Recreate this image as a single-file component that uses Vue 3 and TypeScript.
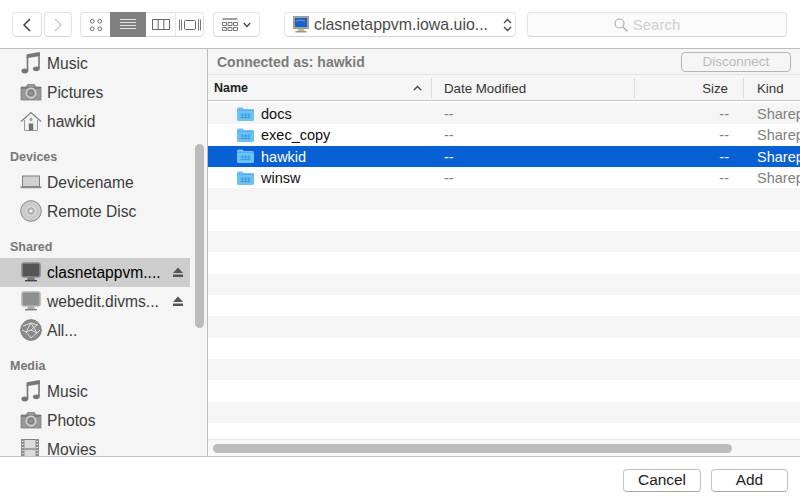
<script setup lang="ts">
interface Item { kind: 'head' | 'row'; label: string; icon?: string; selected?: boolean; eject?: boolean }
const sidebar: Item[] = [
  { kind: 'row', label: 'Music', icon: 'music' },
  { kind: 'row', label: 'Pictures', icon: 'camera' },
  { kind: 'row', label: 'hawkid', icon: 'home' },
  { kind: 'head', label: 'Devices' },
  { kind: 'row', label: 'Devicename', icon: 'laptop' },
  { kind: 'row', label: 'Remote Disc', icon: 'disc' },
  { kind: 'head', label: 'Shared' },
  { kind: 'row', label: 'clasnetappvm....', icon: 'monitor-dark', selected: true, eject: true },
  { kind: 'row', label: 'webedit.divms...', icon: 'monitor', eject: true },
  { kind: 'row', label: 'All...', icon: 'globe' },
  { kind: 'head', label: 'Media' },
  { kind: 'row', label: 'Music', icon: 'music' },
  { kind: 'row', label: 'Photos', icon: 'camera' },
  { kind: 'row', label: 'Movies', icon: 'film' },
]
const files = ['docs', 'exec_copy', 'hawkid', 'winsw']
const emptyRows = Array.from({ length: 12 }, (_, i) => i)
</script>

<template>
  <div class="win">
    <svg class="sprite" width="0" height="0">
      <defs>
        <symbol id="music" viewBox="0 0 22 22">
          <path d="M7.500 3.500V19M19 1v15.500" fill="none" stroke="#777" stroke-width="1.600"/>
          <path d="M6.700 2.200 19.800 0v4L6.700 6.200z" fill="#777"/>
          <ellipse cx="4.800" cy="19" rx="3.400" ry="2.400" fill="#777"/>
          <ellipse cx="16.300" cy="16.800" rx="3.400" ry="2.400" fill="#777"/>
        </symbol>
        <symbol id="camera" viewBox="0 0 22 18">
          <path d="M1 4h5l1.500-2.500h7L16 4h5v13H1z" fill="#979797" stroke="#808080" stroke-width=".8"/>
          <path d="M1 4h20v1.600H1z" fill="#777"/>
          <circle cx="11" cy="10" r="5" fill="#a8a8a8" stroke="#e4e4e4" stroke-width="1"/>
          <circle cx="11" cy="10" r="2.700" fill="#949494" stroke="#666" stroke-width=".7"/>
        </symbol>
        <symbol id="home" viewBox="0 0 22 20">
          <path d="M1 10.500 11 1.500l10 9" fill="none" stroke="#808080" stroke-width="1.300"/>
          <path d="M4.500 9v10.500h13V9" fill="#f2f2f2" stroke="#999" stroke-width="1"/>
          <rect x="8.800" y="12.500" width="4.400" height="7" fill="#707070"/>
          <circle cx="11" cy="8.500" r="1.500" fill="#999"/>
        </symbol>
        <symbol id="laptop" viewBox="0 0 22 14">
          <rect x="2.500" y="1" width="17" height="10.500" fill="#d0d0d0" stroke="#808080" stroke-width="1"/>
          <path d="M0 11.500h22l-1 1.800H1z" fill="#8c8c8c"/>
        </symbol>
        <symbol id="disc" viewBox="0 0 22 22">
          <circle cx="11" cy="11" r="10.300" fill="#cdcdcd" stroke="#888" stroke-width="1"/>
          <circle cx="11" cy="11" r="6" fill="#dadada" stroke="#bbb" stroke-width=".6"/>
          <circle cx="11" cy="11" r="3.300" fill="#bdbdbd" stroke="#999" stroke-width=".7"/>
          <circle cx="11" cy="11" r="1.300" fill="#f5f5f5"/>
        </symbol>
        <symbol id="monitor" viewBox="0 0 20 20">
          <rect x="1" y="1" width="18" height="14" rx="2" fill="#8f8f8f" stroke="#b4b4b4" stroke-width="1.600"/>
          <path d="M7 15.500h6l1 2.500H6z" fill="#aaa"/>
          <rect x="4" y="18" width="12" height="1.400" fill="#808080"/>
        </symbol>
        <symbol id="monitor-dark" viewBox="0 0 20 20">
          <rect x="1" y="1" width="18" height="14" rx="2" fill="#555" stroke="#8a8a8a" stroke-width="1.600"/>
          <path d="M7 15.500h6l1 2.500H6z" fill="#777"/>
          <rect x="4" y="18" width="12" height="1.400" fill="#444"/>
        </symbol>
        <symbol id="globe" viewBox="0 0 22 22">
          <circle cx="11" cy="11" r="10.400" fill="#8a8a8a" stroke="#777" stroke-width=".8"/>
          <path d="M3 7 11 4l7 2M11 4 6 13l5 6 6-5-6-10M6 13l-4-2M17 14l3-3M11 11l6-5M11 11l-5 2M11 11l6 3" fill="none" stroke="#e6e6e6" stroke-width=".9"/>
        </symbol>
        <symbol id="film" viewBox="0 0 18 20">
          <rect x="0.500" y="0.500" width="17" height="19" fill="#dcdcdc" stroke="#808080"/>
          <rect x="0" y="0" width="3.500" height="20" fill="#8c8c8c"/>
          <rect x="14.500" y="0" width="3.500" height="20" fill="#8c8c8c"/>
          <path d="M1 2.500h1.500M1 5.500h1.500M1 8.500h1.500M1 11.500h1.500M1 14.500h1.500M1 17.500h1.500M15.500 2.500H17M15.500 5.500H17M15.500 8.500H17M15.500 11.500H17M15.500 14.500H17M15.500 17.500H17" stroke="#eee"/>
          <path d="M3.500 10h11" stroke="#8c8c8c" stroke-width="1.500"/>
        </symbol>
        <symbol id="folder" viewBox="0 0 17 14">
          <path d="M0 2q0-1.500 1.500-1.500h4L7 2h8.500Q17 2 17 3.500v9q0 1.500-1.500 1.500h-14Q0 14 0 12.500z" fill="#6cc2f6"/>
          <path d="M0 3.500h17" stroke="#4ea9e8" stroke-width=".8"/>
          <path d="M5.200 6v5.500M8.500 6v5.500M11.800 6v5.500M3.500 8h10M3.500 10.500h10" stroke="#3d9de2" stroke-width="1"/>
        </symbol>
      </defs>
    </svg>

    <header class="toolbar">
      <div class="nav">
        <button class="tb back">
          <svg width="10" height="16" viewBox="0 0 10 16"><path d="M8 2 2 8l6 6" fill="none" stroke="#444" stroke-width="1.500"/></svg>
        </button>
        <button class="tb forward">
          <svg width="10" height="16" viewBox="0 0 10 16"><path d="M2 2l6 6-6 6" fill="none" stroke="#ccc" stroke-width="1.500"/></svg>
        </button>
      </div>
      <div class="views">
        <div class="view icon-view">
          <svg width="12" height="12" viewBox="0 0 12 12"><g fill="none" stroke="#666" stroke-width="1"><rect x=".5" y=".5" width="3.500" height="3.500" rx="1.500"/><rect x="8" y=".5" width="3.500" height="3.500" rx="1.500"/><rect x=".5" y="8" width="3.500" height="3.500" rx="1.500"/><rect x="8" y="8" width="3.500" height="3.500" rx="1.500"/></g></svg>
        </div>
        <div class="view list-view">
          <svg width="16" height="12" viewBox="0 0 16 12"><path d="M0 .5h16M0 3.500h16M0 6.500h16M0 9.500h16" stroke="#e4e4e4" stroke-width="1"/></svg>
        </div>
        <div class="view col-view">
          <svg width="18" height="12" viewBox="0 0 18 12"><path d="M.5.500h17v10H.500zM6.200.500v10M11.800.500v10" fill="none" stroke="#666" stroke-width="1"/></svg>
        </div>
        <div class="view flow-view">
          <svg width="22" height="12" viewBox="0 0 22 12"><path d="M.5.500v11M2.500.500v11M19.500.500v11M21.500.500v11" stroke="#777" stroke-width="1"/><rect x="5.500" y="1.500" width="11" height="9" rx="1" fill="none" stroke="#666"/></svg>
        </div>
      </div>
      <button class="tb arrange">
        <svg width="16" height="13" viewBox="0 0 16 13"><g fill="none" stroke="#777" stroke-width="1"><path d="M.5 1h15" stroke-width="1.400"/><path d="M.5 4.500h4v3h-4zM6 4.500h4v3H6zM11.500 4.500h4v3h-4zM.5 9.500h4v3h-4zM6 9.500h4v3H6zM11.500 9.500h4v3h-4z"/></g></svg>
        <svg width="8" height="6" viewBox="0 0 8 6"><path d="M.8 1 4 4.500 7.200 1" fill="none" stroke="#444" stroke-width="1.300"/></svg>
      </button>
      <div class="path">
        <svg class="path-icon" width="16" height="17" viewBox="0 0 16 17">
          <rect x="0.500" y="0.500" width="15" height="12" fill="#c9c2a6" stroke="#a39c80"/>
          <rect x="1.700" y="1.700" width="12.600" height="9.600" fill="#1f5fc4"/>
          <path d="M3 5q4-2 9 0" stroke="#6d9fe6" fill="none"/>
          <path d="M5.500 13h5l1 2h-7z" fill="#bdb69b"/>
          <rect x="2.500" y="15" width="11" height="1.500" fill="#9c9679"/>
        </svg>
        <span class="path-text">clasnetappvm.iowa.uio...</span>
        <svg class="path-arrows" width="9" height="14" viewBox="0 0 9 14"><path d="M1 5 4.500 1.500 8 5M1 9l3.500 3.500L8 9" fill="none" stroke="#444" stroke-width="1.300"/></svg>
      </div>
      <div class="search">
        <svg width="14" height="14" viewBox="0 0 14 14"><circle cx="5.500" cy="5.500" r="4.500" fill="none" stroke="#aaa" stroke-width="1.100"/><path d="M9 9l4.500 4.500" stroke="#aaa" stroke-width="1.200"/></svg>
        <span>Search</span>
      </div>
    </header>

    <main class="body">
      <aside class="sidebar">
        <template v-for="(it, i) in sidebar" :key="i">
          <div v-if="it.kind === 'head'" class="side-head">{{ it.label }}</div>
          <div v-else class="side-row" :class="{ selected: it.selected }">
            <svg class="side-icon" :class="'i-' + it.icon"><use :href="'#' + it.icon" /></svg>
            <span class="side-label">{{ it.label }}</span>
            <svg v-if="it.eject" class="eject" width="10" height="10" viewBox="0 0 10 10"><path d="M5 .5 10 6H0z" fill="#555"/><rect y="7.500" width="10" height="2.500" fill="#555"/></svg>
          </div>
        </template>
        <div class="side-thumb"></div>
      </aside>

      <section class="content">
        <div class="connected">
          <span class="connected-text">Connected as: hawkid</span>
          <div class="disconnect">Disconnect</div>
        </div>
        <div class="thead">
          <div class="th c-name">
            <b>Name</b>
            <svg width="9" height="6" viewBox="0 0 9 6"><path d="M1 5 4.500 1.500 8 5" fill="none" stroke="#444" stroke-width="1.400"/></svg>
          </div>
          <div class="th c-date">Date Modified</div>
          <div class="th c-size">Size</div>
          <div class="th c-kind">Kind</div>
        </div>
        <div class="rows">
          <div v-for="(f, i) in files" :key="f" class="tr" :class="{ active: f === 'hawkid', odd: i % 2 === 0 }">
            <div class="td c-name"><svg class="folder"><use href="#folder" /></svg><span class="fname">{{ f }}</span></div>
            <div class="td c-date muted">--</div>
            <div class="td c-size muted">--</div>
            <div class="td c-kind muted">Sharepoint</div>
          </div>
          <div v-for="n in emptyRows" :key="n" class="tr" :class="{ odd: n % 2 === 0 }"></div>
        </div>
        <div class="hscroll"><div class="hthumb"></div></div>
      </section>
    </main>

    <footer class="bottom">
      <button class="btn cancel">Cancel</button>
      <button class="btn add">Add</button>
    </footer>
  </div>
</template>

<style>
html, body { margin: 0; background: #fff; }
</style>

<style scoped>
.win { width: 800px; height: 503px; display: flex; flex-direction: column; overflow: hidden; font-family: "Liberation Sans", Arial, sans-serif; background: #fff; color: #333; }
.sprite { position: absolute; }
button { font-family: inherit; margin: 0; padding: 0; }

.toolbar { box-sizing: border-box; flex: none; display: flex; align-items: flex-start; padding: 12px 13px 0 12px; border-bottom: 1px solid #bdbdbd; height: 49px; }
.nav { display: flex; gap: 2px; }
.tb { background: #fff; border: 1px solid #e2e2e2; border-bottom-color: #d4d4d4; border-radius: 4px; height: 25px; display: flex; align-items: center; justify-content: center; box-sizing: border-box; }
.back { width: 30px; }
.forward { width: 28px; }
.views { margin-left: 8px; width: 124px; height: 25px; box-sizing: border-box; border: 1px solid #e2e2e2; border-bottom-color: #d4d4d4; border-radius: 4px; display: flex; }
.view { display: flex; align-items: center; justify-content: center; height: 100%; }
.icon-view { width: 29px; }
.list-view { width: 36px; background: #808080; margin-top: -1px; height: 25px; }
.col-view { width: 29px; border-right: 1px solid #e6e6e6; }
.flow-view { flex: 1; }
.arrange { margin-left: 9px; width: 47px; gap: 5px; }
.path { margin-left: 24px; width: 232px; height: 25px; box-sizing: border-box; border: 1px solid #e2e2e2; border-bottom-color: #d4d4d4; border-radius: 4px; display: flex; align-items: center; padding-left: 8px; }
.path-icon { flex: none; }
.path-text { margin-left: 5px; width: 188px; font-size: 15.900px; color: #4a4a4a; white-space: nowrap; }
.path-arrows { margin-left: 1px; }
.search { margin-left: 11px; width: 260px; height: 25px; box-sizing: border-box; border: 1px solid #e2e2e2; border-bottom-color: #d6d6d6; border-radius: 4px; background: #fafafa; display: flex; align-items: center; justify-content: center; gap: 5px; padding-right: 20px; color: #cfcfcf; font-size: 15px; }

.body { flex: none; height: 408px; display: flex; border-bottom: 1px solid #c4c4c4; box-sizing: border-box; }
.sidebar { position: relative; width: 208px; flex: none; box-sizing: border-box; background: #f5f5f5; border-right: 1px solid #bdbdbd; overflow: hidden; }
.side-head { height: 32px; box-sizing: border-box; padding: 14px 0 0 10px; font-size: 12.500px; line-height: 14px; font-weight: bold; color: #777; }
.side-row { width: 190px; height: 29px; display: flex; align-items: center; position: relative; font-size: 15.600px; color: #3c3c3c; }
.side-row.selected { background: #cdcdcd; color: #000; }
.side-icon { position: absolute; left: 20px; top: 3px; width: 22px; height: 22px; }
.i-camera { top: 5px; height: 18px; }
.i-laptop { top: 7px; height: 14px; }
.i-film { left: 21px; width: 18px; height: 20px; top: 4px; }
.i-monitor, .i-monitor-dark { left: 21px; width: 20px; height: 20px; top: 4px; }
.side-label { margin-left: 47px; white-space: nowrap; }
.eject { position: absolute; left: 173px; top: 9px; }
.side-thumb { position: absolute; left: 195px; top: 95px; width: 9px; height: 184px; border-radius: 5px; background: #bcbcbc; }

.content { flex: 1; min-width: 0; display: flex; flex-direction: column; overflow: hidden; }
.connected { height: 26px; flex: none; box-sizing: border-box; background: #f5f5f5; border-bottom: 1px solid #e6e6e6; display: flex; align-items: center; justify-content: space-between; padding: 0 9px 0 9px; }
.connected-text { font-size: 14px; font-weight: bold; color: #7b7b7b; }
.disconnect { width: 110px; height: 20px; box-sizing: border-box; border: 1px solid #b4b4b4; border-radius: 4px; font-size: 13.500px; line-height: 18px; text-align: center; color: #bbb; }

.thead { height: 26px; flex: none; box-sizing: border-box; background: #f5f5f5; border-bottom: 1px solid #c8c8c8; display: flex; font-size: 13.300px; color: #333; margin-bottom: 2px; }
.th { display: flex; align-items: center; height: 20px; margin-top: 3px; box-sizing: border-box; border-right: 1px solid #dcdcdc; }
.th b { color: #222; font-size: 12.500px; }
.c-name { width: 224px; flex: none; box-sizing: border-box; }
.c-date { width: 203px; flex: none; box-sizing: border-box; padding-left: 12px; }
.c-size { width: 109px; flex: none; box-sizing: border-box; justify-content: flex-end; padding-right: 15px; }
.c-kind { flex: none; box-sizing: border-box; padding-left: 13px; white-space: nowrap; }
.th.c-name { padding: 0 9px 0 6px; justify-content: space-between; }
.th.c-kind { border-right: 0; }

.rows { height: 336px; flex: none; overflow: hidden; }
.tr { height: 21.330px; display: flex; align-items: center; background: #fff; font-size: 14.500px; color: #111; }
.tr.odd { background: #f5f5f5; }
.tr.active { background: #0760d4; color: #fff; }
.td { display: flex; align-items: center; white-space: nowrap; padding-top: 1px; }
.td.c-name { padding-left: 29px; }
.folder { width: 17px; height: 14px; margin-right: 7px; flex: none; margin-top: -1px; }
.muted { color: #808080; }
.active .muted { color: #fff; }
.hscroll { height: 18px; flex: 1; background: #f8f8f8; border-top: 1px solid #e8e8e8; box-sizing: border-box; padding: 4px 0 0 5px; }
.hthumb { width: 519px; height: 9px; border-radius: 5px; background: #bcbcbc; }

.bottom { flex: 1; display: flex; justify-content: flex-end; align-items: flex-start; gap: 10px; padding: 12px 12px 0 0; background: #fff; }
.btn { height: 23px; box-sizing: border-box; background: #fff; border: 1px solid #c4c4c4; border-bottom-color: #aaa; border-radius: 4px; font-size: 15.400px; line-height: 19px; padding-bottom: 2px; color: #222; }
.cancel { width: 78px; }
.add { width: 77px; }
</style>
